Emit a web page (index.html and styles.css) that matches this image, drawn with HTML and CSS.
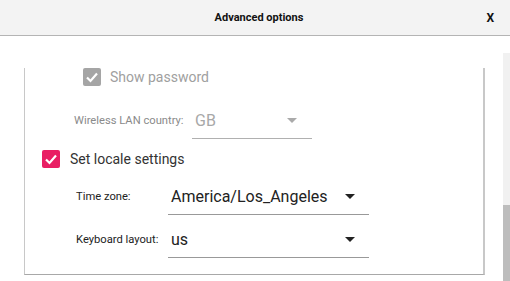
FILE: index.html
```html
<!DOCTYPE html>
<html lang="en">
<head>
    <meta charset="UTF-8">
    <title>Advanced options</title>
    <link rel="stylesheet" href="styles.css">
</head>
<body>

<div class="header">
    <span class="title">Advanced options</span>
    <span class="close">X</span>
</div>

<div class="main">
    <div class="scroll-area">
        <div class="panel">
            <!-- wifi options (disabled) -->
            <div class="check-row indent disabled">
                <span class="checkbox">
                    <svg width="18" height="18" viewBox="0 0 18 18"><polyline points="4,9.5 7.5,13 14,5.5" fill="none" stroke="#fff" stroke-width="2.2"/></svg>
                </span>
                <span class="check-label">Show password</span>
            </div>
            <div class="field-row wifi disabled">
                <span class="field-label">Wireless LAN country:</span>
                <div class="combo">
                    <span class="combo-value">GB</span>
                    <span class="arrow"></span>
                </div>
            </div>

            <!-- locale -->
            <div class="check-row locale">
                <span class="checkbox">
                    <svg width="18" height="18" viewBox="0 0 18 18"><polyline points="4,9.5 7.5,13 14,5.5" fill="none" stroke="#fff" stroke-width="2.2"/></svg>
                </span>
                <span class="check-label">Set locale settings</span>
            </div>
            <div class="field-row timezone">
                <span class="field-label">Time zone:</span>
                <div class="combo">
                    <span class="combo-value">America/Los_Angeles</span>
                    <span class="arrow"></span>
                </div>
            </div>
            <div class="field-row keyboard">
                <span class="field-label">Keyboard layout:</span>
                <div class="combo">
                    <span class="combo-value">us</span>
                    <span class="arrow"></span>
                </div>
            </div>
        </div>
    </div>
    <div class="scrollbar">
        <div class="thumb"></div>
    </div>
</div>

</body>
</html>
```

FILE: styles.css
```css
body {
    font-family: Roboto, "Liberation Sans", sans-serif;
    margin: 0;
    padding: 0;
    background-color: #fff;
    height: 281px;
    overflow: hidden;
}
.header {
    height: 35px;
    background-color: #f3f3f3;
    border-bottom: 1px solid #b4b4b4;
    display: flex;
    align-items: center;
    justify-content: center;
    position: relative;
}
.title {
    font-size: 11px;
    font-weight: bold;
    color: #111;
    margin-left: 8px;
}
.close {
    position: absolute;
    right: 16px;
    top: 11px;
    font-size: 12px;
    font-weight: bold;
    color: #111;
}
.main {
    display: flex;
    padding-top: 17px;
    height: 228px;
}
.scroll-area {
    flex: 1;
    padding-left: 24px;
    padding-right: 18px;
}
.panel {
    border-left: 1px solid #c8c8c8;
    border-right: 2px solid #c8c8c8;
    border-bottom: 1px solid #a8a8a8;
    padding-bottom: 16px;
}
.scrollbar {
    width: 7px;
    background-color: #f1f1f1;
    display: flex;
    flex-direction: column;
    justify-content: flex-end;
}
.thumb {
    height: 76px;
    background-color: #bdbdbd;
}

/* Checkbox rows */
.check-row {
    display: flex;
    align-items: center;
    height: 18px;
}
.check-row.indent {
    margin-top: 15px;
    padding-left: 58px;
}
.check-row.locale {
    margin-top: 11px;
    padding-left: 17px;
}
.checkbox {
    width: 18px;
    height: 18px;
    border-radius: 2px;
    background-color: #e91e63;
    display: inline-block;
}
.checkbox svg {
    display: block;
}
.check-label {
    font-size: 14px;
    color: #333;
    margin-left: 10px;
}
.disabled .checkbox {
    background-color: #a5a5a5;
}
.disabled .check-label {
    color: #a0a0a0;
    margin-left: 9px;
}

/* Label + combobox rows */
.field-row {
    display: flex;
    align-items: center;
}
.field-label {
    font-size: 11.2px;
    color: #222;
}
.combo {
    height: 36px;
    border-bottom: 1px solid #999;
    display: flex;
    align-items: center;
    justify-content: space-between;
    padding-left: 3px;
    padding-right: 14px;
    box-sizing: border-box;
}
.combo-value {
    font-size: 16px;
    color: #222;
}
.arrow {
    width: 0;
    height: 0;
    border-left: 5px solid transparent;
    border-right: 5px solid transparent;
    border-top: 5px solid #222;
}
.field-row.wifi {
    margin-top: 16px;
    padding-left: 49px;
}
.field-row.wifi .field-label {
    width: 118px;
    color: #8a8a8a;
}
.field-row.wifi .combo {
    width: 120px;
    height: 37px;
    border-bottom-color: #b0b0b0;
}
.field-row.wifi .combo-value {
    color: #a8a8a8;
}
.field-row.wifi .arrow {
    border-top-color: #aaa;
    margin-right: 1px;
}
.field-row.timezone {
    margin-top: 10px;
    padding-left: 51px;
}
.field-row.keyboard {
    margin-top: 6px;
    padding-left: 51px;
}
.field-row.timezone .field-label,
.field-row.keyboard .field-label {
    width: 92px;
}
.field-row.timezone .combo,
.field-row.keyboard .combo {
    width: 201px;
    height: 37px;
}
```
